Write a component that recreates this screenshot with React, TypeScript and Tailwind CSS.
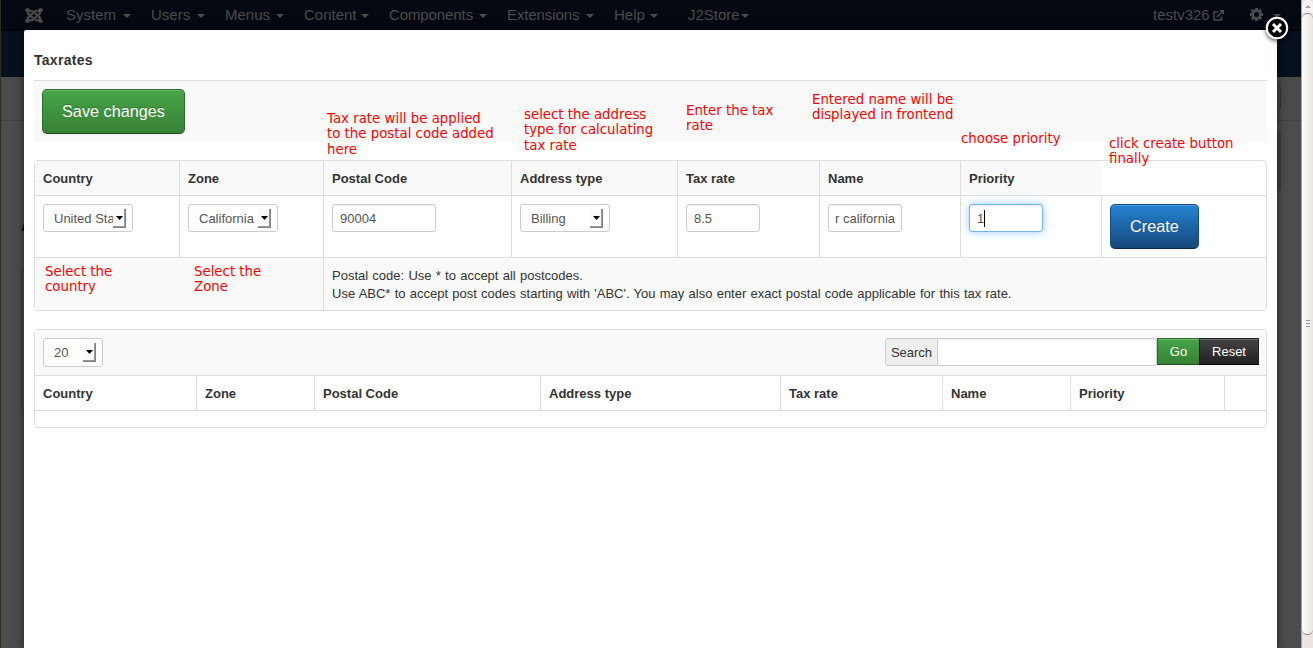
import React from "react";
import { FaJoomla } from "react-icons/fa";

function Caret({ className = "ml-auto" }: { className?: string }) {
  return (
    <svg className={`mt-[2px] shrink-0 ${className}`} width="8" height="4" viewBox="0 0 8 4" fill="currentColor">
      <path d="M0 0h8L4 4z" />
    </svg>
  );
}

const MENUS = [
  { label: "System", width: "w-[65px]", gap: "mr-[20px]" },
  { label: "Users", width: "w-[54px]", gap: "mr-[20px]" },
  { label: "Menus", width: "w-[59px]", gap: "mr-[20px]" },
  { label: "Content", width: "w-[65px]", gap: "mr-[20px]" },
  { label: "Components", width: "w-[98px]", gap: "mr-[20px] tracking-[-0.1px]" },
  { label: "Extensions", width: "w-[87px]", gap: "mr-[20px] tracking-[-0.1px]" },
  { label: "Help", width: "w-[44px]", gap: "mr-[30px]" },
];

function TopBar() {
  return (
    <div className="flex h-[31px] items-center border-b border-black bg-[#040811] text-[15px] text-[#4b4b4b]">
      <FaJoomla className="mr-[23px] ml-[24px] h-[17px] w-[18px] shrink-0" preserveAspectRatio="none" />
      {MENUS.map((m) => (
        <div key={m.label} className={`flex shrink-0 items-center ${m.width} ${m.gap}`}>
          {m.label}
          <Caret />
        </div>
      ))}
      <div className="flex w-[61px] items-center">
        J2Store
        <Caret />
      </div>
      <div className="ml-auto flex w-[148px] shrink-0 items-center">
        <span className="w-[56px]">testv326</span>
        <svg className="ml-[4px]" width="11" height="11" viewBox="0 0 11 11" fill="none" stroke="currentColor">
          <path strokeWidth="1.500" d="M5 2H1v8h7.500V6.500M4 7l5.500-5.500" />
          <path fill="currentColor" stroke="none" d="M6 0h5v5z" />
        </svg>
        <svg className="-mt-px ml-[26px]" width="13" height="13" viewBox="0 0 13 13">
          <g fill="currentColor">
            <rect x="5" width="3" height="13" />
            <rect x="5" width="3" height="13" transform="rotate(45 6.5 6.5)" />
            <rect x="5" width="3" height="13" transform="rotate(90 6.5 6.5)" />
            <rect x="5" width="3" height="13" transform="rotate(135 6.5 6.5)" />
            <circle cx="6.500" cy="6.500" r="5" />
          </g>
          <circle cx="6.500" cy="6.500" r="2.500" fill="#040811" />
        </svg>
        <Caret className="ml-[10px]" />
      </div>
    </div>
  );
}

function Backdrop() {
  return (
    <div className="flex h-[648px] w-[1301px] flex-col border-l border-[#273022] bg-[#4c4c4c]">
      <TopBar />
      <div className="h-[46px] bg-[#07101f]" />
      <div className="flex h-[44px] items-start justify-end border-b border-[#414141] bg-[#4a4a4a] pt-[9px] pr-[20px]">
        <div className="h-[24px] w-[30px] rounded-[3px] border border-[#353535]" />
      </div>
      <div className="flex justify-end pt-[10px] pr-[20px]">
        <div className="h-[60px] w-[30px] rounded-[3px] bg-[#3a443a]" />
      </div>
      <div className="mt-[14px] ml-[20px] text-[18px] leading-[40px] font-bold text-black">A</div>
      <div className="mt-[24px] ml-[20px] h-[144px] w-[30px] rounded-[4px] border border-[#3d3d3d]" />
    </div>
  );
}

function SelectBox({ value, size }: { value: string; size: string }) {
  return (
    <div className={`flex items-center rounded-[3px] border border-[#ccc] bg-white pr-[6px] pl-[10px] text-[#555] ${size}`}>
      <span className="min-w-0 flex-1 overflow-hidden pt-px whitespace-nowrap">{value}</span>
      <span className="flex h-[19px] w-[13px] shrink-0 items-center justify-center border-r border-b border-[#808080] bg-[#fafafa] shadow-[inset_-1px_-1px_0_#999]">
        <svg width="7" height="4" viewBox="0 0 7 4">
          <path d="M0 0h7L3.500 4z" />
        </svg>
      </span>
    </div>
  );
}

function TextBox({ children, size, end = false }: { children: React.ReactNode; size: string; end?: boolean }) {
  return (
    <div
      className={`flex h-[28px] items-center overflow-hidden rounded-[3px] border border-[#ccc] bg-white pt-px whitespace-nowrap text-[#555] shadow-[inset_0_1px_1px_rgba(0,0,0,0.075)] ${size} ${end ? "justify-end pr-[6px]" : "px-[7px]"}`}
    >
      {children}
    </div>
  );
}

function Note({ lines, place }: { lines: string[]; place: string }) {
  return (
    <div className={`absolute font-['DejaVu_Sans',sans-serif] text-[13.33px] leading-[15.4px] whitespace-nowrap text-[#f00] ${place}`}>
      {lines.map((l) => (
        <div key={l}>{l}</div>
      ))}
    </div>
  );
}

function RateForm() {
  return (
    <table className="w-[1233px] table-fixed border-separate border-spacing-0 overflow-hidden rounded-[4px] border border-[#ddd]">
      <colgroup>
        <col className="w-[144px]" />
        <col className="w-[144px]" />
        <col className="w-[188px]" />
        <col className="w-[166px]" />
        <col className="w-[142px]" />
        <col className="w-[141px]" />
        <col className="w-[141px]" />
        <col className="w-[165px]" />
      </colgroup>
      <thead>
        <tr className="h-[34px] text-left">
          {["Country", "Zone", "Postal Code", "Address type", "Tax rate", "Name", "Priority"].map((h, i) => (
            <th key={h} className={`bg-[#f9f9f9] p-0 pt-px pl-[8px] ${i ? "border-l border-[#ddd]" : ""} ${i === 6 ? "rounded-tr-[4px]" : ""}`}>
              {h}
            </th>
          ))}
          <td />
        </tr>
      </thead>
      <tbody>
        <tr className="h-[62px] align-top [&>td]:border-t [&>td]:border-l [&>td]:border-[#ddd] [&>td]:p-0 [&>td]:pt-[8px] [&>td]:pl-[8px] [&>td:first-child]:border-l-0">
          <td><SelectBox value="United States" size="h-[28px] w-[90px]" /></td>
          <td><SelectBox value="California" size="h-[28px] w-[90px]" /></td>
          <td><TextBox size="w-[104px]">90004</TextBox></td>
          <td><SelectBox value="Billing" size="h-[28px] w-[90px]" /></td>
          <td><TextBox size="w-[74px]">8.5</TextBox></td>
          <td><TextBox size="w-[74px]" end>r california</TextBox></td>
          <td>
            <div className="flex h-[28px] w-[74px] items-center rounded-[3px] border border-[#72b6ee] bg-white px-[7px] text-[#555] shadow-[inset_0_1px_1px_rgba(0,0,0,0.075),0_0_8px_rgba(82,168,236,0.6)]">
              <span className="pt-px">1</span>
              <span className="h-[17px] w-px bg-black" />
            </div>
          </td>
          <td>
            <button className="block h-[45px] w-[89px] rounded-[5px] border border-[#15497c] border-b-[#0b2a4a] bg-linear-to-b from-[#2384d3] to-[#15497c] text-[16.25px] text-white shadow-[inset_0_1px_0_rgba(255,255,255,0.2),0_1px_2px_rgba(0,0,0,0.05)] [text-shadow:0_-1px_0_rgba(0,0,0,0.25)]">
              Create
            </button>
          </td>
        </tr>
        <tr className="h-[53px] align-top">
          <td colSpan={2} className="border-t border-[#ddd] bg-[#f9f9f9]" />
          <td colSpan={6} className="border-t border-l border-[#ddd] bg-[#f9f9f9] p-0 pt-[9px] pl-[8px] leading-[18px] [word-spacing:0.63px]">
            Postal code: Use * to accept all postcodes.
            <br />
            Use ABC* to accept post codes starting with 'ABC'. You may also enter exact postal code applicable for this tax rate.
          </td>
        </tr>
      </tbody>
    </table>
  );
}

const LIST_COLUMNS = [
  { label: "Country", width: "w-[162px]" },
  { label: "Zone", width: "w-[118px]" },
  { label: "Postal Code", width: "w-[226px]" },
  { label: "Address type", width: "w-[240px]" },
  { label: "Tax rate", width: "w-[162px]" },
  { label: "Name", width: "w-[128px]" },
  { label: "Priority", width: "w-[154px]" },
];

function RateList() {
  return (
    <div className="mt-[18px] h-[99px] w-[1233px] overflow-hidden rounded-[4px] border border-[#ddd]">
      <div className="flex h-[46px] items-start justify-between border-b border-[#ddd] bg-[#f9f9f9] pt-[8px] pr-[7px] pl-[8px]">
        <SelectBox value="20" size="h-[29px] w-[60px]" />
        <div className="flex">
          <div className="flex h-[28px] w-[53px] items-center justify-center rounded-l-[3px] border border-[#ccc] bg-[#eee] pt-px text-[#333]">Search</div>
          <div className="-ml-px h-[28px] w-[220px] rounded-r-[3px] border border-[#ccc] bg-white shadow-[inset_0_1px_1px_rgba(0,0,0,0.075)]" />
          <button className="h-[27px] w-[43px] border border-[#2d6e2d] border-b-[#1f4d1f] bg-linear-to-b from-[#46a546] to-[#378137] text-white shadow-[inset_0_1px_0_rgba(255,255,255,0.2)]">Go</button>
          <button className="-ml-px h-[27px] w-[60px] border border-[#222] border-b-black bg-linear-to-b from-[#444] to-[#222] text-white shadow-[inset_0_1px_0_rgba(255,255,255,0.2)]">Reset</button>
        </div>
      </div>
      <div className="flex h-[35px] border-b border-[#ddd] leading-[35px] font-bold">
        {LIST_COLUMNS.map((c) => (
          <div key={c.label} className={`shrink-0 border-r border-[#ddd] pl-[8px] ${c.width}`}>
            {c.label}
          </div>
        ))}
      </div>
    </div>
  );
}

function Scrollbar() {
  return (
    <div className="flex h-[648px] w-[12px] flex-col border-l border-[#aaa39c] bg-[#eae5e1]">
      <div className="flex h-[13px] items-center justify-center rounded-t-[6px] bg-[#f6f4f2]">
        <svg width="6" height="3" viewBox="0 0 6 3" fill="#aaa39c"><path d="M0 3l3-3 3 3z" /></svg>
      </div>
      <div className="flex h-[622px] flex-col items-center justify-center gap-[2px] rounded-[6px] border-y border-[#8b857e] bg-linear-to-r from-white to-[#eae4df] pb-[2px]">
        <span className="h-px w-[4px] bg-[#999]" />
        <span className="h-px w-[4px] bg-[#999]" />
        <span className="h-px w-[4px] bg-[#999]" />
      </div>
    </div>
  );
}

export default function App() {
  return (
    <div className="relative flex h-[648px] w-[1313px] overflow-hidden font-['Liberation_Sans',Arial,sans-serif] text-[13px] text-[#333]">
      <Backdrop />
      <Scrollbar />

      <div className="absolute top-[30px] left-[24px] h-[618px] w-[1253px] rounded-t-[2px] bg-white px-[10px] shadow-[0_0_10px_rgba(0,0,0,0.6)]">
        <h3 className="h-[50px] pt-[21px] text-[14px] leading-[18px] font-bold tracking-[0.28px]">Taxrates</h3>
        <div className="mb-[18px] h-[62px] border-t border-[#ddd] bg-[#f9f9f9] pt-[8px] pl-[8px]">
          <button className="block h-[45px] w-[143px] rounded-[5px] border border-[#2d6e2d] border-b-[#1f4d1f] bg-linear-to-b from-[#46a546] to-[#378137] text-[16.25px] text-white shadow-[inset_0_1px_0_rgba(255,255,255,0.2),0_1px_2px_rgba(0,0,0,0.05)] [text-shadow:0_-1px_0_rgba(0,0,0,0.25)]">
            Save changes
          </button>
        </div>
        <RateForm />
        <RateList />
      </div>

      <svg className="absolute top-[15px] left-[1263px] drop-shadow-[0_2px_2px_rgba(0,0,0,0.6)]" width="28" height="28" viewBox="0 0 28 28">
        <circle cx="14" cy="13" r="10.200" fill="#000" stroke="#fff" strokeWidth="2" />
        <path d="M10 9l8 8m0-8l-8 8" stroke="#fff" strokeWidth="3" />
      </svg>

      <Note place="top-[111px] left-[327px]" lines={["Tax rate will be applied", "to the postal code added", "here"]} />
      <Note place="top-[107px] left-[524px]" lines={["select the address", "type for calculating", "tax rate"]} />
      <Note place="top-[103px] left-[686px]" lines={["Enter the tax", "rate"]} />
      <Note place="top-[92px] left-[812px]" lines={["Entered name will be", "displayed in frontend"]} />
      <Note place="top-[131px] left-[961px]" lines={["choose priority"]} />
      <Note place="top-[136px] left-[1109px]" lines={["click create button", "finally"]} />
      <Note place="top-[264px] left-[45px]" lines={["Select the", "country"]} />
      <Note place="top-[264px] left-[194px]" lines={["Select the", "Zone"]} />
    </div>
  );
}
